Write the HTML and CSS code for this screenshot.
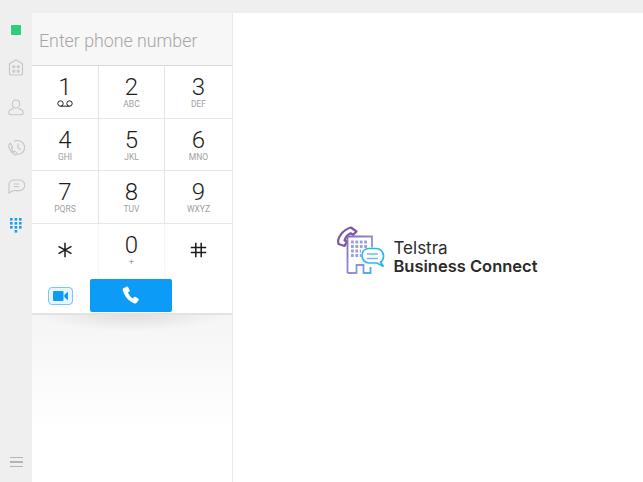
FILE: index.html
```html
<!DOCTYPE html>
<html lang="en"><head>
  <meta charset="UTF-8"/>
  <title>Telstra Business Connect</title>
  <link rel="stylesheet" href="styles.css">
</head><body>
  <div class="app">
    <nav class="sidebar">
      <span class="presence"></span>
      <svg class="nav-icon building" width="16" height="17" viewBox="0 0 16 17"><path d="M1.500 4.800 8 1l6.500 3.800V14a2 2 0 0 1-2 2h-9a2 2 0 0 1-2-2z"/><g class="dots"><rect x="4.300" y="6.300" width="3" height="3" rx=".8"/><rect x="8.700" y="6.300" width="3" height="3" rx=".8"/><rect x="4.300" y="10.700" width="3" height="3" rx=".8"/><rect x="8.700" y="10.700" width="3" height="3" rx=".8"/></g></svg>
      <svg class="nav-icon contact" width="16" height="17" viewBox="0 0 16 17"><path d="M8 1c2.200 0 3.600 1.700 3.600 3.900S10.200 9 8 9 4.400 7.100 4.400 4.900 5.800 1 8 1z"/><path d="M5.500 9.500C3 10.200.8 11 .8 13.400c0 1.600 1 2.400 2.600 2.400h9.200c1.600 0 2.600-.8 2.600-2.400 0-2.400-2.200-3.200-4.700-3.900"/></svg>
      <svg class="nav-icon history" width="17" height="17" viewBox="0 0 17 17"><path d="M6 2.500a7 7 0 1 1 3.500 13"/><path d="M10 4.500v4.200l2.600 2"/><path d="M2.300 4.300C.8 5.300.4 6.800 1 8.500c.8 2.700 2.700 5.300 5 6.800 1.300.8 2.500.6 3.300-.6l-2.300-2.300-1.400.6C4.500 11.800 3.800 10.500 3.400 9l1.200-1z"/></svg>
      <svg class="nav-icon chat" width="17" height="15" viewBox="0 0 17 15"><path d="M5.500 1h6a4.700 4.700 0 0 1 0 10.600H5L1 14V5.500A4.500 4.500 0 0 1 5.500 1z"/><path d="M5.500 5h5.500M5.500 7.800h5.500"/></svg>
      <svg class="keypad-icon" width="12" height="15" viewBox="0 0 12 15"><rect x="0" y="0" width="2.600" height="2.600"/><rect x="4.600" y="0" width="2.600" height="2.600"/><rect x="9" y="0" width="2.600" height="2.600"/><rect x="0" y="4" width="2.600" height="2.600"/><rect x="4.600" y="4" width="2.600" height="2.600"/><rect x="9" y="4" width="2.600" height="2.600"/><rect x="0" y="8" width="2.600" height="2.600"/><rect x="4.600" y="8" width="2.600" height="2.600"/><rect x="9" y="8" width="2.600" height="2.600"/><rect x="4.600" y="12" width="2.600" height="2.600"/></svg>
      <div class="menu"><span></span><span></span><span></span></div>
    </nav>

    <section class="dialer">
      <div class="number">Enter phone number</div>
      <div class="keys">
        <div class="key"><b>1</b><svg class="voicemail" width="16" height="7" viewBox="0 0 16 7"><circle cx="3.500" cy="3.500" r="2.700"/><circle cx="12.500" cy="3.500" r="2.700"/><path d="M3.500 6.200h9"/></svg></div>
        <div class="key"><b>2</b><small>ABC</small></div>
        <div class="key"><b>3</b><small>DEF</small></div>
        <div class="key"><b>4</b><small>GHI</small></div>
        <div class="key"><b>5</b><small>JKL</small></div>
        <div class="key"><b>6</b><small>MNO</small></div>
        <div class="key"><b>7</b><small>PQRS</small></div>
        <div class="key"><b>8</b><small>TUV</small></div>
        <div class="key"><b>9</b><small>WXYZ</small></div>
        <div class="key"><svg width="16" height="16" viewBox="0 0 16 16"><path class="sym" d="M8 .8v14.400M1.500 4.300l13 7.400M14.500 4.300l-13 7.400"/></svg></div>
        <div class="key"><b>0</b><small>+</small></div>
        <div class="key"><svg width="17" height="16" viewBox="0 0 17 16"><path class="sym" d="M5.800.8v14.400M11.200.8v14.400M.8 5.400h15.400M.8 10.600h15.400"/></svg></div>
      </div>
      <div class="actions">
        <button class="video"><svg width="15" height="10" viewBox="0 0 15 10"><rect x="0" y="0" width="10.500" height="10" rx="1.200"/><path d="M11.300 3.700 15 .8v8.400l-3.700-2.900z"/></svg></button>
        <button class="call"><svg width="18" height="18" viewBox="0 0 18 18"><path d="M4.500.7 1.300 2.300C.6 2.800.6 3.800.9 4.800c1.700 5.600 6.200 10.600 11 12.400 1.200.4 2.200.3 2.800-.5l2-2.600c.3-.5.200-1-.3-1.300l-3-2c-.5-.3-1-.2-1.300.2l-1.200 1.400c-2.100-1-4-3.500-4.900-5.900l1.400-1c.4-.3.500-.8.300-1.300L6 1c-.3-.5-1-.6-1.500-.3z"/></svg></button>
      </div>
      <div class="fade"></div>
    </section>

    <main class="pane">
      <div class="logo">
        <svg width="50" height="48" viewBox="0 0 50 48" fill="none">
          <defs>
            <linearGradient id="lg" x1="0" y1="0" x2="1" y2="1"><stop offset="0" stop-color="#8a68b8"/><stop offset=".6" stop-color="#8f93d8"/><stop offset="1" stop-color="#3fb4ea"/></linearGradient>
          </defs>
          <path stroke="#7b57a8" stroke-width="2.200" stroke-linejoin="round" d="M16 1.500 21.500 5.500l-3.300 3.300-2.700-1.500c-3 1.500-5 4-6 7l2.300 1.400-2.200 4.300-6-2C1.500 13 7 4 16 1.500z"/>
          <path stroke="url(#lg)" stroke-width="1.800" d="M12.500 47V10.500h24.500v11M12.500 47h9v-8h7v8h7v-6"/>
          <path stroke="#9aa0dc" stroke-width="2.800" stroke-dasharray="2.800 1.600" d="M16 16h16M16 20.500h16M16 25h10M16 29.500h10"/>
          <path stroke="#2cb6ee" stroke-width="1.700" d="M34 22.500h7a7.500 7.500 0 0 1 7.500 7.500c0 3-1 5-3 6l3 4.500-6.500-3.500H34c-4 0-7-3-7-7.500s3-7 7-7z"/>
          <path stroke="#6dbde6" stroke-width="1.700" d="M32 28h11M32 32.500h11"/>
        </svg>
        <div class="logo-text"><span>Telstra</span><strong>Business Connect</strong></div>
      </div>
    </main>
  </div>
</body></html>
```
FILE: styles.css
```css
* {box-sizing:border-box}
html,body {margin:0;height:100%}
body {font-family:Roboto,sans-serif;background:#efefef;color:#222;overflow:hidden}
.app {display:flex;height:482px;padding-top:13px}

.sidebar {width:32px;flex:none;display:flex;flex-direction:column;align-items:center;padding-top:12px}
.presence {width:10px;height:10px;background:#28d17c;box-shadow:0 0 0 1px #f8f8f8;margin-bottom:24px;flex:none}
.nav-icon {fill:none;stroke:#c6c6c6;stroke-width:1.100;margin-bottom:23px;flex:none}
.nav-icon .dots {fill:#cccccc;stroke:none}
.keypad-icon {fill:#1b9cf5;flex:none;margin-top:1px}
.menu {margin-top:auto;margin-bottom:15px;display:flex;flex-direction:column;gap:3px}
.menu span {display:block;width:13px;height:1.500px;background:#b4b4b4}

.dialer {width:201px;flex:none;background:linear-gradient(#f5f5f5,#f5f5f5 302px,#ffffff 420px);border-right:1px solid #ebebeb;display:flex;flex-direction:column}
.number {height:53px;background:#f7f7f7;padding:17px 0 0 7px;font-size:17.800px;font-weight:300;line-height:22px;color:#a6a6a6;border-bottom:1px solid #d9d9d9}
.keys {display:grid;grid-template-columns:67px 66px 67px;grid-auto-rows:52.700px;background:#fff}
.key {display:flex;flex-direction:column;align-items:center;justify-content:flex-start;padding-top:9px;border-right:1px solid #e4e4e4;border-bottom:1px solid #e8e8e8}
.key:nth-child(3n) {border-right:none}
.key:nth-child(n+10) {border-bottom:none;justify-content:center;padding-top:0;border-right-color:#f6f6f6}
.key:nth-child(11) {justify-content:flex-start;padding-top:9px}
.key b {font-size:24px;font-weight:300;line-height:25px;color:#1c1c1c}
.key small {font-size:8.500px;line-height:10px;color:#a0a0a0;margin-top:-1px}
.voicemail {fill:none;stroke:#222;stroke-width:1;margin-top:0}
.sym {fill:none;stroke:#1c1c1c;stroke-width:1.500}

.actions {height:38px;background:#fff;border-bottom:2px solid #e2e2e2;display:flex;align-items:flex-start;flex:none}
.actions button {border:none;padding:0;display:flex;align-items:center;justify-content:center;flex:none}
.video {width:25px;height:18px;margin:10px 0 0 16px;background:#e8f4ff;border:1.500px solid #7cc4fb !important;border-radius:4px}
.video svg {fill:#0c9bf7}
.call {width:82px;height:33px;margin:2px 0 0 17px;background:#0c9bf7;border-radius:2px}
.call svg {fill:#fff}
.fade {flex:1;background:radial-gradient(ellipse 90px 16px at 50% 0,rgba(205,205,205,.55),rgba(243,243,243,0))}

.pane {flex:1;background:#fff;display:flex;align-items:center;justify-content:center;padding:4px 3px 0 0}
.logo {display:flex;align-items:center;gap:8px}
.logo-text {display:flex;flex-direction:column;font-family:Inter,sans-serif;font-size:17px;line-height:18px;color:#2b2b2b;padding-top:14px}
.logo-text strong {font-weight:600;font-size:16.500px}
```
